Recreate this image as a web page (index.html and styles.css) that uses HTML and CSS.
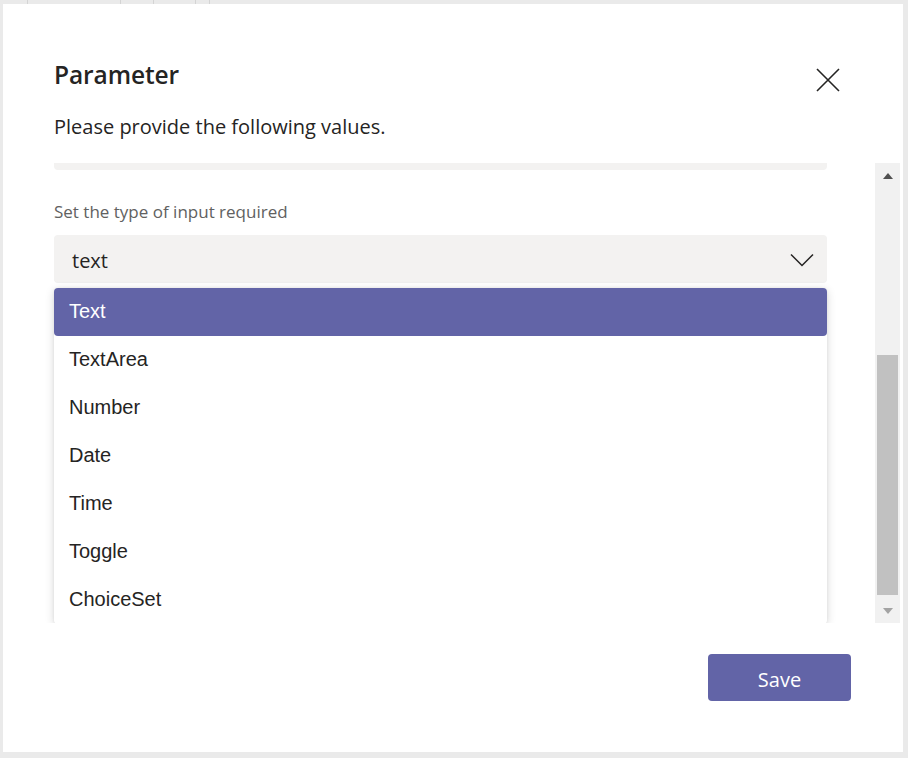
FILE: index.html
```html
<!DOCTYPE html>
<html lang="en">
<head>
<meta charset="utf-8">
<title>Parameter</title>
<link rel="stylesheet" href="styles.css">
</head>
<body>
<div class="backdrop-ticks">
  <span class="tick t1"></span><span class="tick t2"></span><span class="tick t3"></span><span class="tick t4"></span><span class="tick t5"></span>
</div>
<div class="dialog">
  <div class="header">
    <h1 class="title">Parameter</h1>
    <button class="close" aria-label="Close">
      <svg width="24" height="24" viewBox="0 0 24 24"><path d="M1 1 L23 23 M23 1 L1 23" stroke="#252423" stroke-width="1.6" fill="none"/></svg>
    </button>
  </div>
  <p class="desc">Please provide the following values.</p>
  <div class="scroll">
    <div class="scroll-content">
      <div class="prev-field"></div>
      <label class="label">Set the type of input required</label>
      <div class="select">
        <span class="select-value">text</span>
        <svg class="chevron" width="24" height="14" viewBox="0 0 24 14"><path d="M1 1.5 L12 12.5 L23 1.5" stroke="#252423" stroke-width="1.5" fill="none"/></svg>
      </div>
      <ul class="menu">
        <li class="item selected">Text</li>
        <li class="item">TextArea</li>
        <li class="item">Number</li>
        <li class="item">Date</li>
        <li class="item">Time</li>
        <li class="item">Toggle</li>
        <li class="item">ChoiceSet</li>
      </ul>
    </div>
    <div class="scrollbar">
      <div class="arrow up"></div>
      <div class="track"><div class="thumb"></div></div>
      <div class="arrow down"></div>
    </div>
  </div>
  <div class="footer">
    <button class="save">Save</button>
  </div>
</div>
</body>
</html>
```

FILE: styles.css
```css
* { box-sizing: border-box; }
html, body { margin: 0; }
body {
  background: #eaeaea;
  padding: 4px 5px 6px 3px;
  font-family: "Open Sans", "Noto Sans", sans-serif;
  color: #252423;
  position: relative;
}
.backdrop-ticks { position: absolute; top: 0; left: 0; right: 0; height: 4px; }
.tick { position: absolute; top: 0; width: 1px; height: 4px; background: #d4d4d4; }
.t1 { left: 27px; } .t2 { left: 153px; } .t3 { left: 195px; } .t4 { left: 209px; } .t5 { left: 120px; }

.dialog {
  background: #fff;
  height: 748px;
  display: flex;
  flex-direction: column;
}
.header {
  display: flex;
  justify-content: space-between;
  align-items: flex-start;
  padding: 55px 63px 0 51px;
}
.title {
  margin: 0;
  font-size: 24.5px;
  font-weight: 600;
  line-height: 32px;
  letter-spacing: -0.1px;
}
.close {
  border: 0;
  background: none;
  padding: 0;
  margin-top: 9px;
  width: 24px;
  height: 24px;
}
.close svg { display: block; }
.desc {
  margin: 21px 0 0 51px;
  font-size: 20px;
  line-height: 28px;
}
.scroll {
  margin-top: 22px;
  height: 460px;
  display: flex;
  padding-right: 3px;
}
.scroll-content {
  flex: 1;
  overflow: hidden;
  padding: 0 48px 0 51px;
}
.prev-field {
  height: 40px;
  margin-top: -33px;
  background: #f3f2f1;
  border-radius: 4px;
}
.label {
  display: block;
  margin-top: 32px;
  font-size: 17px;
  line-height: 20px;
  color: #616161;
}
.select {
  margin-top: 13px;
  height: 47px;
  background: #f3f2f1;
  border-radius: 4px;
  display: flex;
  align-items: center;
  justify-content: space-between;
  padding: 0 13px 0 18px;
  box-shadow: 0 1px 0 rgba(0,0,0,0.06);
}
.select-value {
  font-family: "Open Sans", "Noto Sans", sans-serif;
  font-size: 20px;
  padding-top: 3px;
}
.chevron { display: block; margin-top: 2px; }
.menu {
  list-style: none;
  margin: 6px 0 0;
  padding: 0;
  background: #fff;
  border-radius: 4px;
  box-shadow: 0 2px 10px rgba(0,0,0,0.16), 0 0 3px rgba(0,0,0,0.06);
}
.item {
  height: 48px;
  line-height: 46px;
  padding-left: 15px;
  font-family: "Liberation Sans", Arial, sans-serif;
  font-size: 20px;
  color: #252423;
}
.item.selected {
  background: #6264a7;
  color: #fff;
  border-radius: 4px;
}
.scrollbar {
  width: 25px;
  background: #f1f1f1;
  display: flex;
  flex-direction: column;
}
.arrow {
  height: 25px;
  display: flex;
  align-items: center;
  justify-content: center;
}
.arrow.up::before {
  content: "";
  border-left: 5px solid transparent;
  border-right: 5px solid transparent;
  border-bottom: 6px solid #505050;
}
.arrow.down::before {
  content: "";
  border-left: 5px solid transparent;
  border-right: 5px solid transparent;
  border-top: 6px solid #a3a3a3;
}
.track {
  flex: 1;
  position: relative;
  padding: 167px 2px 0;
}
.thumb {
  height: 240px;
  background: #c1c1c1;
}
.footer {
  display: flex;
  justify-content: flex-end;
  padding: 31px 52px 0 0;
}
.save {
  width: 143px;
  height: 47px;
  border: 0;
  border-radius: 4px;
  background: #6264a7;
  color: #fff;
  font-family: "Open Sans", "Noto Sans", sans-serif;
  font-size: 20px;
  padding: 3px 0 0;
}
```
